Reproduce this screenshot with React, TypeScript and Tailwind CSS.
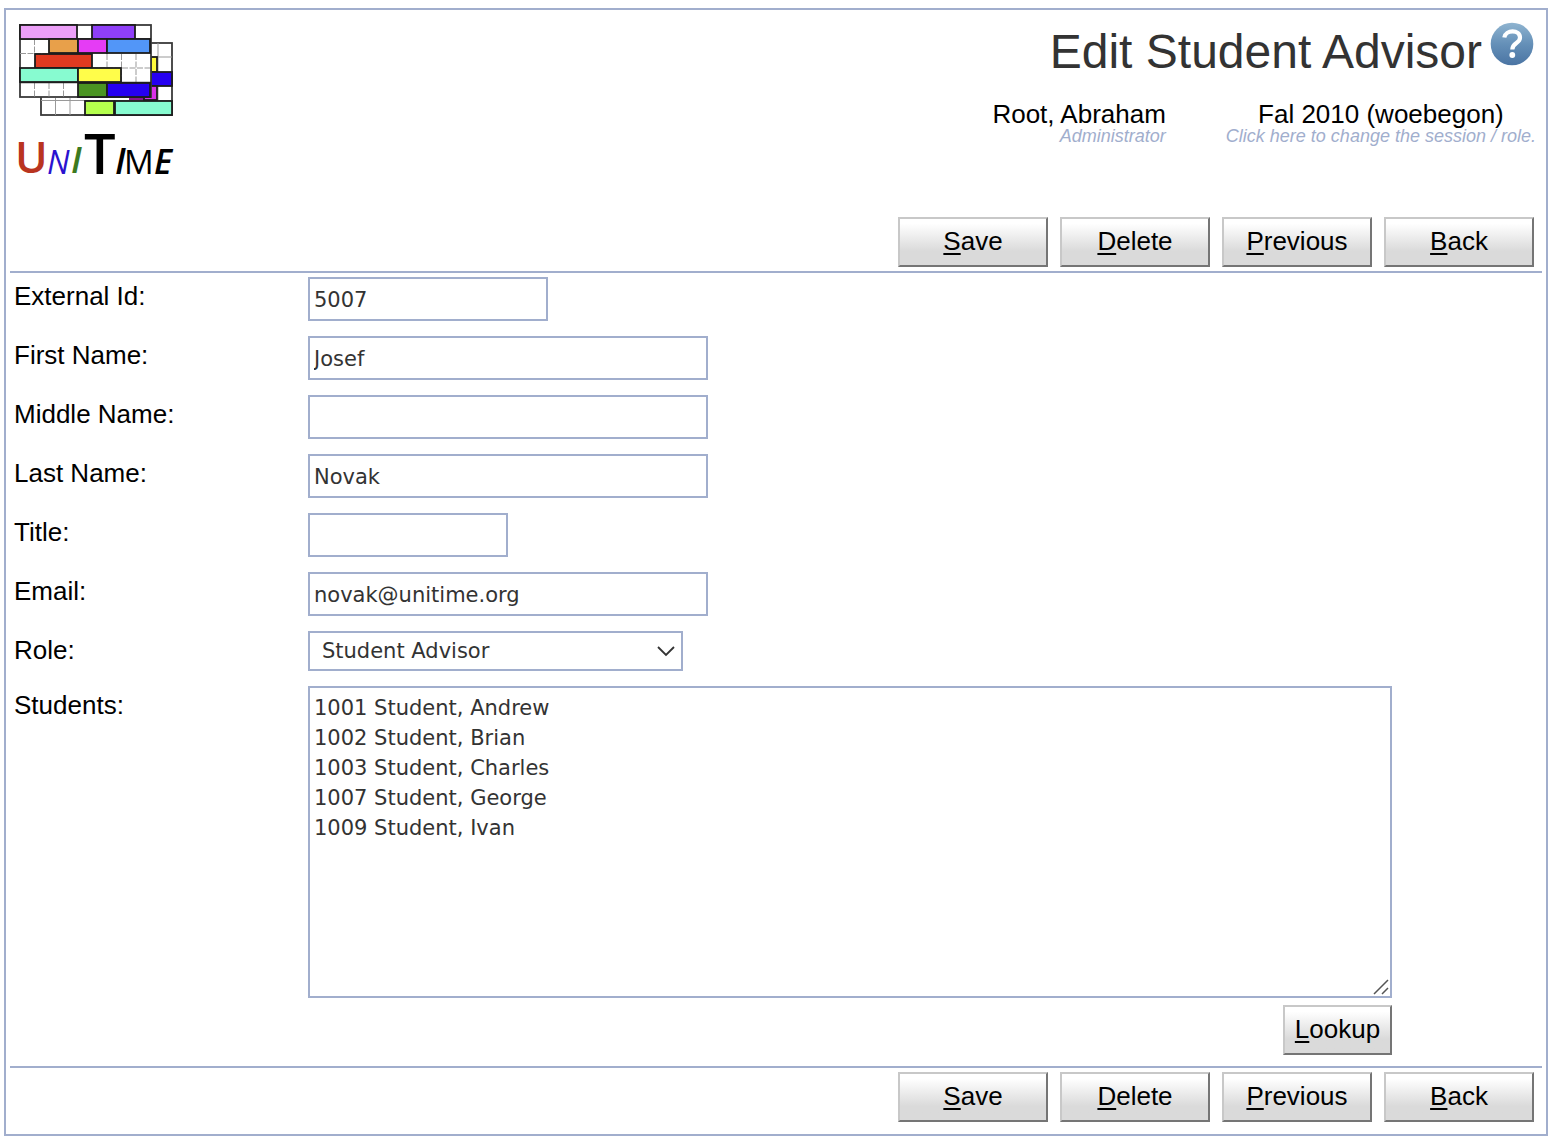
import React from "react";

type Cell = [x: number, y: number, w: number, h: number, fill: string];

const backCells: Cell[] = [
  [151, 57, 6, 15, "#fffb3c"],
  [151, 72, 21, 14, "#2600f0"],
  [144, 86, 13, 14, "#d930e8"],
  [85, 101, 29, 14, "#b5ff4d"],
  [115, 101, 57, 14, "#87fbd0"],
];

const frontCells: Cell[] = [
  [20, 25, 57, 14, "#ec9ff8"],
  [92, 25, 43, 14, "#8f3ff8"],
  [49, 39, 29, 14, "#e8a04a"],
  [78, 39, 29, 14, "#e53cf5"],
  [107, 39, 43, 14, "#5296f8"],
  [35, 54, 57, 14, "#e13a20"],
  [20, 68, 58, 14, "#87fbd0"],
  [78, 68, 43, 14, "#fffd4a"],
  [78, 83, 29, 14, "#4a9422"],
  [107, 83, 43, 14, "#2600f0"],
];

function Cells({ cells }: { cells: Cell[] }) {
  return (
    <g stroke="#1c1c1c" strokeWidth="1.8">
      {cells.map(([x, y, w, h, fill]) => (
        <rect key={`${x}-${y}`} x={x} y={y} width={w} height={h} fill={fill} />
      ))}
    </g>
  );
}

function Logo() {
  return (
    <svg viewBox="12 20 168 176" className="h-[176px] w-[168px]" role="img" aria-label="UniTime">
      <rect x="41" y="43" width="131" height="72" fill="#fff" stroke="#3a3a3a" strokeWidth="1.8" />
      <path
        d="M158 43V100M151 57H172M55.500 98V115M70 98V115M41 100.500H172"
        stroke="#999"
        strokeWidth="1"
        fill="none"
      />
      <rect x="129" y="96" width="28" height="4" fill="#8a1590" />
      <Cells cells={backCells} />
      <rect x="20" y="25" width="131" height="72" fill="#fff" stroke="#3a3a3a" strokeWidth="1.8" />
      <path
        d="M34.500 39V54M20 53.500H49M92 68H150M107 54V68M121.500 54V82M136 54V82M34.500 83V97M49 83V97M63.500 83V97"
        stroke="#999"
        strokeWidth="1"
        strokeDasharray="6 1.500"
        fill="none"
      />
      <path d="M20 39H151M20 82.500H151" stroke="#333" strokeWidth="1.600" />
      <Cells cells={frontCells} />
      <g fontFamily="Open Sans, sans-serif" fontWeight="600">
        <text x="15" y="173" fontSize="44" fill="#b93420">U</text>
        <text x="47" y="174" fontSize="32" fontStyle="italic" fontWeight="500" fill="#2a12cf">N</text>
        <text x="71" y="173" fontSize="36" fontStyle="italic" fill="#3c7a20">I</text>
        <text x="84" y="174" fontSize="56" fill="#000">T</text>
        <text x="115" y="174" fontSize="36" fontStyle="italic" fill="#000">I</text>
        <text x="124" y="174" fontSize="33" fontWeight="500" fill="#000">M</text>
        <text x="154" y="174" fontSize="34" fontStyle="italic" fill="#000">E</text>
      </g>
    </svg>
  );
}

function HelpIcon() {
  return (
    <svg viewBox="0 0 44 44" className="size-11" aria-hidden="true">
      <defs>
        <linearGradient id="help-fill" x1="0" y1="0" x2="0" y2="1">
          <stop offset="0" stopColor="#8fb4d0" />
          <stop offset="0.5" stopColor="#6590b8" />
          <stop offset="1" stopColor="#4a74a3" />
        </linearGradient>
      </defs>
      <circle cx="22" cy="22" r="21.300" fill="url(#help-fill)" />
      <path
        d="M14.300 15.500C15.500 7.500 30 7.300 30 15.800C30 21.500 22.300 20.500 22.300 27.500"
        fill="none"
        stroke="#fff"
        strokeWidth="4.200"
      />
      <circle cx="22.300" cy="33" r="2.900" fill="#fff" />
    </svg>
  );
}

function Button({ label, className = "" }: { label: string; className?: string }) {
  return (
    <button
      type="button"
      accessKey={label[0].toLowerCase()}
      className={`h-[50px] border-2 border-t-[#c8c8c8] border-r-[#757575] border-b-[#757575] border-l-[#c8c8c8] bg-linear-to-b from-white from-10% to-[#dadada] to-70% pb-[2px] text-[26px] leading-[30px] text-black ${className}`}
    >
      <span className="underline decoration-2 underline-offset-3">{label[0]}</span>
      {label.slice(1)}
    </button>
  );
}

function ButtonBar() {
  return (
    <div className="flex flex-wrap justify-end gap-3 pr-2">
      {["Save", "Delete", "Previous", "Back"].map((label) => (
        <Button key={label} label={label} className="w-[150px]" />
      ))}
    </div>
  );
}

function Row({ id, label, children }: { id: string; label: string; children: React.ReactNode }) {
  return (
    <div className="flex items-start">
      <label htmlFor={id} className="w-[294px] shrink-0 text-[26px] leading-[38px] text-black">
        {label}
      </label>
      <div className="min-w-0 grow">{children}</div>
    </div>
  );
}

const control =
  "block max-w-full border-2 border-[#a1aecd] bg-white font-['DejaVu_Sans',sans-serif] text-[21px] text-[#333] outline-none";

const fields = [
  { id: "external-id", label: "External Id:", value: "5007", width: "w-[240px]" },
  { id: "first-name", label: "First Name:", value: "Josef", width: "w-[400px]" },
  { id: "middle-name", label: "Middle Name:", value: "", width: "w-[400px]" },
  { id: "last-name", label: "Last Name:", value: "Novak", width: "w-[400px]" },
  { id: "title", label: "Title:", value: "", width: "w-[200px]" },
  { id: "email", label: "Email:", value: "novak@unitime.org", width: "w-[400px]" },
];

const students = [
  "1001 Student, Andrew",
  "1002 Student, Brian",
  "1003 Student, Charles",
  "1007 Student, George",
  "1009 Student, Ivan",
].join("\n");

export default function App() {
  return (
    <div className="bg-white pt-2 pr-[2px] pb-[6px] pl-1 font-['Liberation_Sans',Arial,sans-serif]">
      <div className="border-2 border-[#a1aecd] px-1 pb-3">
        <header className="flex h-[207px] items-start justify-between pt-[10px] pl-[2px]">
          <Logo />
          <div className="flex flex-col items-end">
            <div className="flex items-start gap-2 pt-[2px] pr-2">
              <h1 className="pt-[3px] text-[48px] leading-[54px] text-[#333]">Edit Student Advisor</h1>
              <a href="#help" aria-label="Help">
                <HelpIcon />
              </a>
            </div>
            <div className="flex gap-[60px] pt-[21px] pr-[6px]">
              <div className="text-right">
                <div className="text-[26px] leading-[28px] text-black">Root, Abraham</div>
                <div className="text-[18px] leading-4 text-[#a1aecd] italic">Administrator</div>
              </div>
              <a href="#session" className="text-center">
                <span className="block text-[26px] leading-[28px] text-black">Fal 2010 (woebegon)</span>
                <span className="block text-[18px] leading-4 text-[#a1aecd] italic">
                  Click here to change the session / role.
                </span>
              </a>
            </div>
          </div>
        </header>

        <ButtonBar />

        <form className="mt-1 mb-1 flex flex-col gap-[15px] border-y-2 border-[#a1aecd] pt-1 pb-[11px] pl-1">
          {fields.map((field) => (
            <Row key={field.id} id={field.id} label={field.label}>
              <input
                id={field.id}
                type="text"
                defaultValue={field.value}
                className={`${control} h-11 px-1 pt-[2px] ${field.width}`}
              />
            </Row>
          ))}
          <Row id="role" label="Role:">
            <div className="relative w-[375px] max-w-full">
              <select id="role" className={`${control} h-10 w-full appearance-none px-3 pt-[2px]`}>
                <option>Student Advisor</option>
              </select>
              <svg
                viewBox="0 0 18 12"
                className="pointer-events-none absolute top-[14px] right-2 h-3 w-[18px]"
                fill="none"
                stroke="#333"
                strokeWidth="1.800"
                aria-hidden="true"
              >
                <path d="M1 2L9 10L17 2" />
              </svg>
            </div>
          </Row>
          <Row id="students" label="Students:">
            <div className="flex w-[1084px] max-w-full flex-col items-end gap-[7px]">
              <div className="relative w-full">
                <textarea
                  id="students"
                  defaultValue={students}
                  className={`${control} h-[312px] w-full resize-none px-1 py-[5px] leading-[30px]`}
                />
                <svg
                  viewBox="0 0 16 16"
                  className="pointer-events-none absolute right-[3px] bottom-[3px] size-4"
                  fill="none"
                  stroke="#555"
                  strokeWidth="1.500"
                  aria-hidden="true"
                >
                  <path d="M1 15L15 1M9 15L15 9" />
                </svg>
              </div>
              <Button label="Lookup" className="w-[109px]" />
            </div>
          </Row>
        </form>

        <ButtonBar />
      </div>
    </div>
  );
}
